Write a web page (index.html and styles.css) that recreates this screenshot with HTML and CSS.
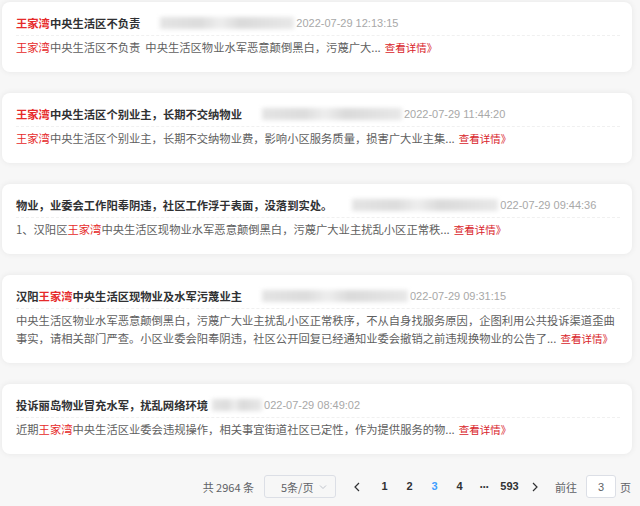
FILE: index.html
```html
<!DOCTYPE html>
<html lang="zh-CN">
<head>
  <meta charset="UTF-8" />
  <title>投诉列表</title>
  <link rel="stylesheet" href="styles.css">
</head>
<body>
  <div class="list">
    <div class="card">
      <div class="card-head">
        <span class="title"><em>王家湾</em>中央生活区不负责</span>
        <span class="mask mask-a"></span>
        <span class="date">2022-07-29 12:13:15</span>
      </div>
      <p class="desc"><em>王家湾</em>中央生活区不负责&nbsp;&nbsp;中央生活区物业水军恶意颠倒黑白，污蔑广大...<a class="more" href="#">查看详情》</a></p>
    </div>

    <div class="card">
      <div class="card-head">
        <span class="title"><em>王家湾</em>中央生活区个别业主，长期不交纳物业</span>
        <span class="mask mask-b"></span>
        <span class="date">2022-07-29 11:44:20</span>
      </div>
      <p class="desc"><em>王家湾</em>中央生活区个别业主，长期不交纳物业费，影响小区服务质量，损害广大业主集...<a class="more" href="#">查看详情》</a></p>
    </div>

    <div class="card">
      <div class="card-head">
        <span class="title">物业，业委会工作阳奉阴违，社区工作浮于表面，没落到实处。</span>
        <span class="mask mask-c"></span>
        <span class="date">022-07-29 09:44:36</span>
      </div>
      <p class="desc">1、汉阳区<em>王家湾</em>中央生活区现物业水军恶意颠倒黑白，污蔑广大业主扰乱小区正常秩...<a class="more" href="#">查看详情》</a></p>
    </div>

    <div class="card">
      <div class="card-head">
        <span class="title">汉阳<em>王家湾</em>中央生活区现物业及水军污蔑业主</span>
        <span class="mask mask-c"></span>
        <span class="date">022-07-29 09:31:15</span>
      </div>
      <p class="desc">中央生活区物业水军恶意颠倒黑白，污蔑广大业主扰乱小区正常秩序，不从自身找服务原因，企图利用公共投诉渠道歪曲事实，请相关部门严查。小区业委会阳奉阴违，社区公开回复已经通知业委会撤销之前违规换物业的公告了...<a class="more" href="#">查看详情》</a></p>
    </div>

    <div class="card">
      <div class="card-head">
        <span class="title">投诉丽岛物业冒充水军，扰乱网络环境</span>
        <span class="mask mask-d"></span>
        <span class="date">022-07-29 08:49:02</span>
      </div>
      <p class="desc">近期<em>王家湾</em>中央生活区业委会违规操作，相关事宜街道社区已定性，作为提供服务的物...<a class="more" href="#">查看详情》</a></p>
    </div>
  </div>

  <div class="pager">
    <span class="total">共 2964 条</span>
    <div class="sizes">
      <span>5条/页</span>
      <svg width="8" height="8" viewBox="0 0 8 8"><path d="M1 2.5 L4 5.5 L7 2.5" fill="none" stroke="#c0c4cc" stroke-width="1"/></svg>
    </div>
    <button class="btn">
      <svg width="8" height="10" viewBox="0 0 8 10"><path d="M6 1 L2 5 L6 9" fill="none" stroke="#303133" stroke-width="1.2"/></svg>
    </button>
    <ul class="pages">
      <li>1</li>
      <li>2</li>
      <li class="active">3</li>
      <li>4</li>
      <li class="dots">•••</li>
      <li>593</li>
    </ul>
    <button class="btn">
      <svg width="8" height="10" viewBox="0 0 8 10"><path d="M2 1 L6 5 L2 9" fill="none" stroke="#303133" stroke-width="1.2"/></svg>
    </button>
    <span class="jump">前往</span>
    <input class="jump-input" value="3">
    <span class="jump-unit">页</span>
  </div>
</body>
</html>
```

FILE: styles.css
```css
* {
  margin: 0;
  padding: 0;
  box-sizing: border-box;
}
body {
  background: #f7f7f7;
  font-family: "Noto Sans CJK SC", "Liberation Sans", sans-serif;
  font-size: 11.3px;
  color: #606266;
}
em {
  font-style: normal;
  color: #e62a2a;
}
.list {
  padding: 2px 8px 0 2px;
  display: flex;
  flex-direction: column;
  gap: 21px;
}
.card {
  background: #fff;
  border-radius: 8px;
  box-shadow: 0 0 6px rgba(0, 0, 0, 0.07);
  padding: 12px 12px 15px 14px;
}
.card-head {
  display: flex;
  align-items: center;
  height: 22px;
  padding-bottom: 4px;
  border-bottom: 1px dashed #f0f0f0;
}
.title {
  font-weight: bold;
  color: #303133;
  line-height: 18px;
  white-space: nowrap;
}
.mask {
  display: inline-block;
  height: 12px;
  margin-left: 20px;
  background: linear-gradient(90deg, #e4e4e4 0%, #dcdcdc 30%, #eeeeee 45%, #dadada 60%, #e8e8e8 100%);
  filter: blur(2px);
}
.mask-a { width: 134px; }
.mask-b { width: 140px; }
.mask-c { width: 146px; }
.mask-d { width: 50px; margin-left: 4px; }
.date {
  font-family: "Liberation Sans", Arial, sans-serif;
  font-size: 11px;
  color: #a8a8a8;
  margin-left: 2px;
}
.desc {
  margin-top: 2px;
  line-height: 18px;
  color: #606060;
}
.more {
  display: inline-block;
  color: #d9252b;
  font-size: 10.5px;
  text-decoration: none;
  margin-left: 4px;
}
.pager {
  display: flex;
  align-items: center;
  justify-content: flex-end;
  padding: 21px 9px 0 0;
  font-size: 11px;
  color: #606266;
}
.total {
  margin-right: 10px;
}
.sizes {
  width: 72px;
  height: 23px;
  border: 1px solid #dcdfe6;
  border-radius: 3px;
  display: flex;
  align-items: center;
  justify-content: space-between;
  padding: 0 8px 0 16px;
  margin-right: 8px;
}
.btn {
  width: 25px;
  height: 23px;
  border: none;
  background: none;
  display: flex;
  align-items: center;
  justify-content: center;
}
.pages {
  list-style: none;
  display: flex;
  margin-left: 3px;
}
.pages li {
  width: 25px;
  height: 23px;
  line-height: 23px;
  text-align: center;
  font-weight: bold;
  color: #303133;
  font-family: "Liberation Sans", Arial, sans-serif;
}
.pages li.active {
  color: #409eff;
}
.pages li.dots {
  font-size: 7px;
  letter-spacing: 0.5px;
}
.jump {
  margin-left: 8px;
}
.jump-input {
  width: 30px;
  height: 23px;
  margin: 0 4px 0 9px;
  border: 1px solid #dcdfe6;
  border-radius: 3px;
  text-align: center;
  font-size: 11px;
  color: #606266;
  font-family: "Liberation Sans", Arial, sans-serif;
}
```
